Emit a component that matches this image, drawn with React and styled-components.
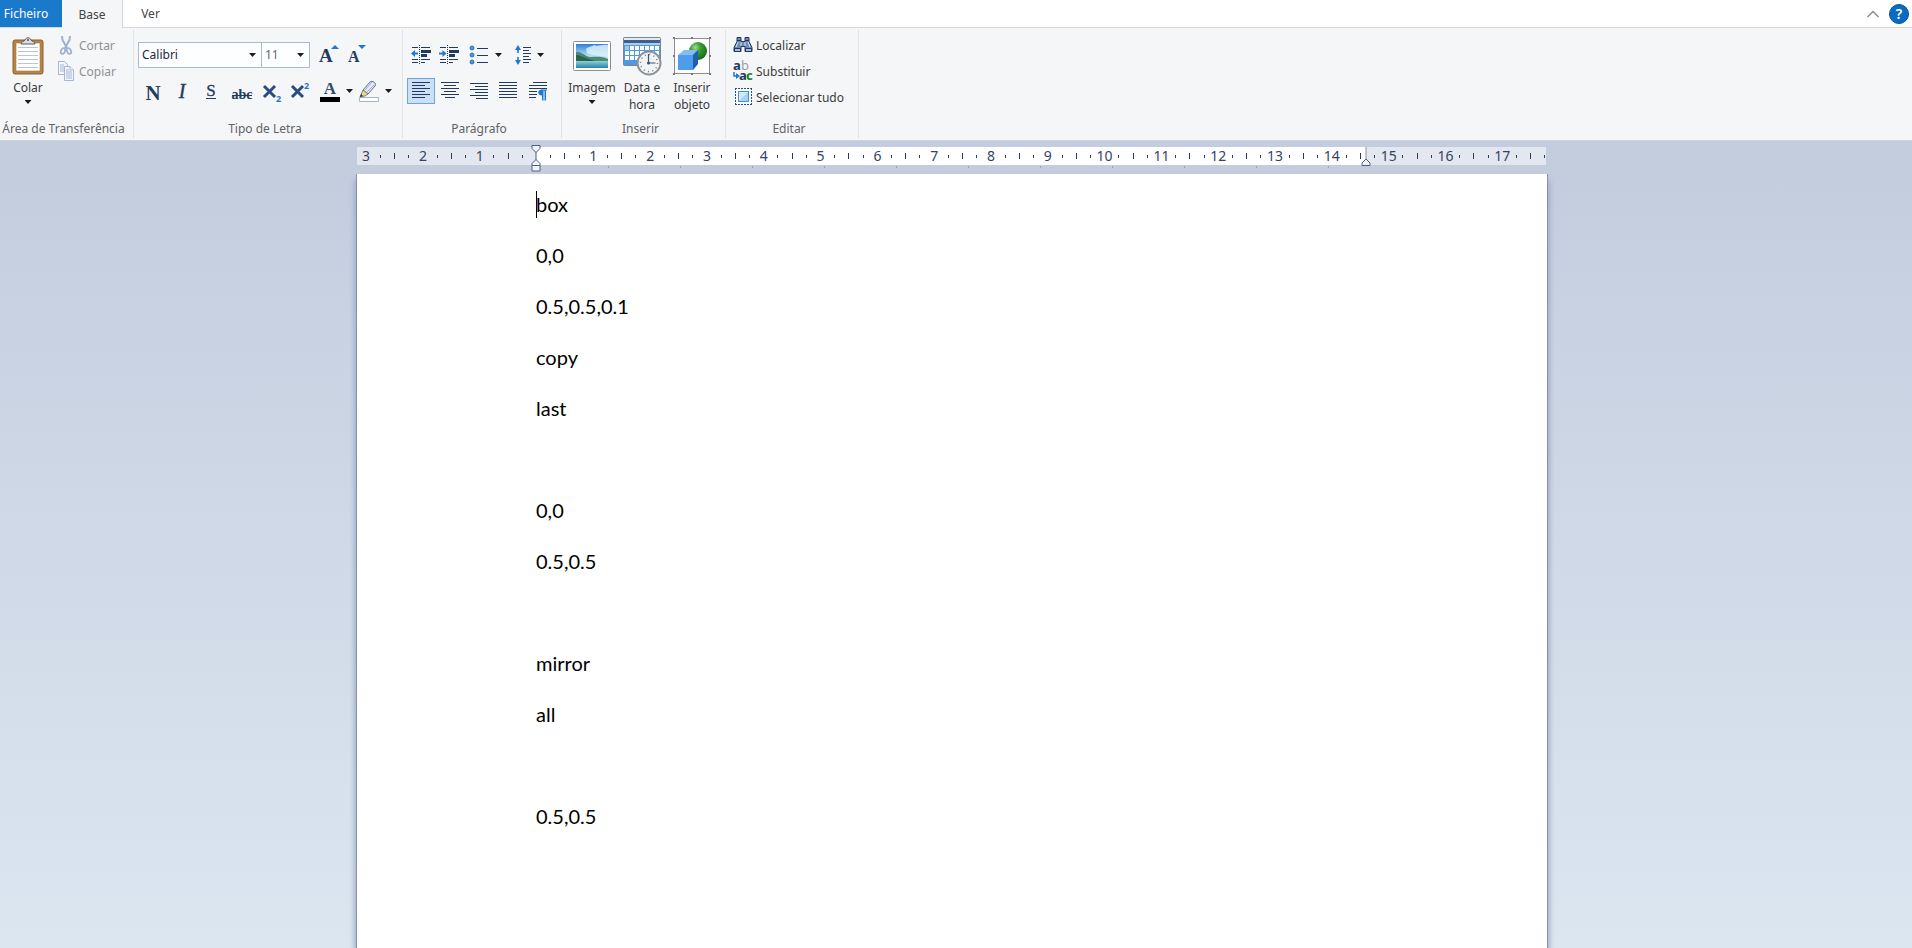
import styled, { createGlobalStyle } from "styled-components";

const GlobalStyle = createGlobalStyle`
  * { box-sizing: border-box; }
  body {
    margin: 0;
    font-family: "Noto Sans", "Open Sans", sans-serif;
    font-size: 12px;
    color: #3b3b3b;
  }
  button, select {
    font: inherit;
    color: inherit;
    background: none;
    border: none;
    border-radius: 0;
    margin: 0;
    padding: 0;
  }
  svg { display: block; flex: none; overflow: visible; }
`;

const Window = styled.div`
  display: flex;
  flex-direction: column;
  height: 100vh;
  overflow: hidden;
  background: #fff;
`;

const TabBar = styled.nav`
  display: flex;
  flex: none;
  height: 28px;
  background: #fff;
  border-bottom: 1px solid #d5d9de;
`;

const Tab = styled.button`
  height: ${({ $kind }) => ($kind === "active" ? "28px" : "27px")};
  width: ${({ $kind }) => ($kind === "file" ? "62px" : $kind === "active" ? "61px" : "55px")};
  padding-right: ${({ $kind }) => ($kind === "file" ? "10px" : "0")};
  background: ${({ $kind }) => ({ file: "#1979ca", active: "#f5f6f7" }[$kind] || "none")};
  color: ${({ $kind }) => ($kind === "file" ? "#fff" : "#444")};
  border-right: ${({ $kind }) => ($kind === "active" ? "1px solid #d5d9de" : "none")};
`;

const TabTools = styled.div`
  display: flex;
  align-items: center;
  gap: 10px;
  margin-left: auto;
  padding-right: 3px;
`;

const Help = styled.button`
  width: 20px;
  height: 20px;
  border-radius: 50%;
  border: 1px solid #0a4f9c;
  background: #0b6bc4;
  color: #fff;
  font-size: 14px;
  font-weight: 600;
  line-height: 18px;
`;

const Ribbon = styled.div`
  display: flex;
  flex: none;
  height: 113px;
  padding: 2px 0;
  background: #f5f6f7;
  border-bottom: 1px solid #ccd3de;
`;

const GroupBox = styled.section`
  display: flex;
  flex-direction: column;
  width: ${({ $width }) => $width}px;
  height: 108px;
  border-right: 1px solid #dfe2e6;
`;

const GroupBody = styled.div`
  display: flex;
  height: 90px;
  padding-left: ${({ $left }) => $left || 0}px;
`;

const GroupLabel = styled.div`
  display: flex;
  justify-content: center;
  padding-right: 6px;
  line-height: 19px;
  white-space: nowrap;
  color: #5f6368;
`;

const BigButton = styled.button`
  display: flex;
  flex-direction: column;
  align-items: center;
  width: ${({ $width }) => $width || 50}px;
  padding-top: 5px;
  line-height: 17px;
`;

const BigIcon = styled.span`
  display: flex;
  align-items: center;
  height: 44px;
  padding-bottom: 3px;
`;

const Arrow = styled.span`
  flex: none;
  width: 7px;
  height: 4px;
  margin-top: ${({ $below }) => ($below ? "4px" : "0")};
  background: #1b1b1b;
  clip-path: polygon(0 0, 100% 0, 50% 100%);
`;

const Stack = styled.div`
  display: flex;
  flex-direction: column;
  padding-top: 2px;
`;

const SmallButton = styled.button`
  display: flex;
  align-items: center;
  gap: ${({ $gap }) => $gap || 3}px;
  height: 26px;
  padding-left: 2px;
  white-space: nowrap;
  color: ${({ disabled }) => (disabled ? "#8f9296" : "inherit")};
`;

const ToolRows = styled.div`
  display: flex;
  flex-direction: column;
  gap: 10px;
  padding-top: 12px;
`;

const ToolRow = styled.div`
  display: flex;
  gap: ${({ $gap }) => $gap || 0}px;
  height: 26px;
`;

const ComboWrap = styled.label`
  display: flex;
  align-items: center;
  position: relative;
  width: ${({ $width }) => $width}px;
  height: 26px;
  margin-right: ${({ $after }) => $after || -1}px;
  border: 1px solid #abbacf;
  background: #fdfeff;

  ${Arrow} {
    position: absolute;
    right: 5px;
    pointer-events: none;
  }
`;

const Combo = styled.select`
  appearance: none;
  width: 100%;
  height: 24px;
  padding: 0 0 1px 3px;
  color: ${({ $muted }) => ($muted ? "#5d6673" : "#1c2744")};
`;

const IconButton = styled.button`
  display: flex;
  align-items: center;
  justify-content: center;
  width: ${({ $width }) => $width || 28}px;
  height: 26px;
  border: 1px solid ${({ $pressed }) => ($pressed ? "#6fa5d8" : "transparent")};
  background: ${({ $pressed }) => ($pressed ? "#c9e0f7" : "none")};
`;

const SplitButton = styled.button`
  display: flex;
  align-items: center;
  gap: 6px;
  padding-left: ${({ $left }) => $left || 6}px;
`;

const Workspace = styled.main`
  display: flex;
  flex: 1;
  flex-direction: column;
  align-items: center;
  min-height: 0;
  padding: 6px 8px 0 0;
  background: linear-gradient(#c4cdde 0, #c4cdde 30px, #dce6f1 100%);
`;

const Ruler = styled.div`
  position: relative;
  flex: none;
  width: 100%;
  max-width: 1190px;
  height: 27px;
  padding-right: 1px;
`;

const RulerTrack = styled.div`
  height: 18px;
  overflow: hidden;
  background: linear-gradient(90deg, #e3e7ef 179px, #fff 179px, #fff 1009px, #e3e7ef 1009px);
`;

const Marks = styled.div`
  display: grid;
  grid-template-columns: repeat(84, 1fr);
  align-items: center;
  justify-items: center;
  width: calc(100% + 6px);
  height: 18px;
  padding-left: 2px;
`;

const Tick = styled.span`
  width: 1px;
  height: ${({ $half }) => ($half ? 6 : 3)}px;
  background: #2d3c57;
`;

const Mark = styled.span`
  display: flex;
  justify-content: center;
  width: 0;
  font-size: 14px;
  line-height: 18px;
  color: #34445f;
`;

const TabStops = styled.div`
  width: 793px;
  height: 2px;
  margin: 1px 0 0 179px;
  background: linear-gradient(90deg, #9aa5b8 1px, transparent 1px) 0 0 / 72px 2px;
`;

const Indent = styled.svg`
  position: absolute;
  top: ${({ $top }) => $top}px;
  left: ${({ $left }) => $left}px;
`;

const Page = styled.article`
  position: relative;
  flex: 1;
  width: 100%;
  max-width: 1190px;
  min-height: 0;
  padding: 5px 180px 0 179px;
  background: #fff;
  box-shadow: -1px 0 #8790ac, 1px 0 #8790ac, 0 8px 6px 2px #97a3bf;
  clip-path: inset(0 -8px);
  font-family: Lato, "Noto Sans", sans-serif;
  font-size: 20px;
  line-height: 51px;
  color: #000;
`;

const Paragraph = styled.p`
  height: 51px;
  margin: 0;
`;

const Caret = styled.span`
  position: absolute;
  top: 17px;
  left: 179px;
  width: 1px;
  height: 27px;
  background: #000;
`;

const NAVY = "#223a5e";
const BLUE = "#1f78cf";

function Group({ label, width, left, children }) {
  return (
    <GroupBox $width={width} aria-label={label}>
      <GroupBody $left={left}>{children}</GroupBody>
      <GroupLabel>{label}</GroupLabel>
    </GroupBox>
  );
}

const PasteIcon = () => (
  <svg width="32" height="38" viewBox="0 0 32 38">
    <rect x="1" y="3" width="30" height="34" rx="2" fill="#b98443" stroke="#8c6030" />
    <rect x="4" y="6" width="24" height="28" fill="#fff" stroke="#9c7848" strokeWidth=".6" />
    {[11, 15, 19, 23, 27, 31].map((y) => (
      <path key={y} d={`M6 ${y - 0.5}h20`} stroke="#b3c6dd" />
    ))}
    <path d="M9 7c0-3 3-2 4-4 1-3 5-3 6 0 1 2 4 1 4 4z" fill="#d9dde1" stroke="#565b60" />
    <circle cx="16" cy="3" r="1" fill="#4b4f54" />
  </svg>
);

const CutIcon = () => (
  <svg width="16" height="20" viewBox="0 0 16 20" fill="none" stroke="#9fb0cd">
    <path d="M4 1l.5 4L9 13M12 1l-.5 4L7 13" strokeWidth="2" />
    <ellipse cx="5" cy="16" rx="2" ry="3" strokeWidth="1.7" transform="rotate(25 5 16)" />
    <ellipse cx="11" cy="16" rx="2" ry="3" strokeWidth="1.7" transform="rotate(-25 11 16)" />
  </svg>
);

const CopyIcon = () => (
  <svg width="16" height="20" viewBox="0 0 16 20" fill="#f2f6fc" stroke="#a5b7d4">
    <path d="M.5.5h6l3 3v10h-9z" />
    <path d="M2 4h4M2 6h5M2 8h5M2 10h5" />
    <path d="M6.500 5.500h5.500l3.500 3.500v10.500h-9z" />
    <path d="M12 5.500v3.500h3.500M8 9h3M8 11h6M8 13h6M8 15h6M8 17h6" />
  </svg>
);

const GrowIcon = ({ shrink }) => (
  <svg width="20" height="20" viewBox="0 0 20 20">
    <text x={shrink ? 1 : 0} y="17" fontFamily="Liberation Serif, serif" fontWeight="bold" fontSize={shrink ? 16 : 19} fill={NAVY}>A</text>
    <path d={shrink ? "M11 0h8l-4 4z" : "M12 4h8l-4-4z"} fill={BLUE} />
  </svg>
);

const StyleIcon = ({ kind }) => {
  const serif = { fontFamily: "Liberation Serif, serif", fill: NAVY, textAnchor: "middle" };
  return (
    <svg width="24" height="22" viewBox="0 0 24 22">
      {kind === "bold" && <text {...serif} x="12" y="20" fontSize="21" fontWeight="bold">N</text>}
      {kind === "italic" && <text {...serif} x="12" y="18" fontSize="20" fontStyle="italic" stroke={NAVY} strokeWidth=".4">I</text>}
      {kind === "under" && (
        <>
          <text {...serif} x="13" y="16" fontSize="17" stroke={NAVY} strokeWidth=".3">S</text>
          <path d="M8 18.500h10" stroke={NAVY} />
        </>
      )}
      {kind === "strike" && (
        <>
          <text {...serif} x="13" y="19" fontSize="14" fontWeight="bold">abc</text>
          <path d="M3 15.500h20" stroke={NAVY} />
        </>
      )}
    </svg>
  );
};

const ScriptIcon = ({ sup }) => (
  <svg width="20" height="22" viewBox="0 0 20 22">
    <path d="M2 6l11 11M13 6L2 17" stroke="#2b4c7e" strokeWidth="3" />
    <text x="14" y={sup ? 9 : 22} fontFamily="Noto Sans, sans-serif" fontWeight="bold" fontSize="9" fill={BLUE}>2</text>
  </svg>
);

const FontColorIcon = () => (
  <svg width="20" height="20" viewBox="0 0 20 20">
    <text x="10" y="13" textAnchor="middle" fontFamily="Liberation Serif, serif" fontWeight="bold" fontSize="17" fill="#34496b">A</text>
    <path d="M0 16h20v5H0z" fill="#000" />
  </svg>
);

const HighlightIcon = () => (
  <svg width="20" height="22" viewBox="0 0 20 22">
    <path d="M.5 17.500h19v4H.5z" fill="#fff" stroke="#a3b6c9" />
    <path d="M4 10L11 2c2-2 7 1 5 4L9 14z" fill="#e4eaf4" stroke="#5c7192" />
    <path d="M6 10l7-8M8 12l7-7" stroke="#9aabc6" />
    <path d="M4 10l5 4-3 2-5 1z" fill="#f1d67d" stroke="#5c6b80" strokeWidth=".8" />
    <path d="M1 17l1-3 2 2z" fill="#26303f" />
  </svg>
);

const IndentIcon = ({ more }) => (
  <svg width="20" height="20" viewBox="0 0 20 20" stroke={NAVY} fill="none">
    <path d="M1 2.500h6M10 2.500h9M1 14.500h6M10 14.500h9M1 17.500h6M10 17.500h4" />
    <path d="M10 6.500h10M10 10.500h6" strokeWidth="3" />
    <path d="M8.500 0v20" strokeDasharray="1 1" />
    <path d={more ? "M0 8.500h5" : "M3 8.500h4"} stroke={BLUE} strokeWidth="2" />
    <path d={more ? "M3.500 5v7l4-3.500z" : "M4 5v7L0 8.500z"} fill={BLUE} stroke="none" />
  </svg>
);

const BulletsIcon = () => (
  <svg width="20" height="20" viewBox="0 0 20 20">
    {[3, 10, 17].map((y) => (
      <g key={y}>
        <circle cx="3" cy={y} r="2" fill="#4b93dd" stroke="#1763b5" strokeWidth=".8" />
        <path d={`M8 ${y + 0.5}h11`} stroke={NAVY} />
      </g>
    ))}
  </svg>
);

const SpacingIcon = () => (
  <svg width="16" height="20" viewBox="0 0 16 20">
    <path d="M3 3v14" stroke={BLUE} strokeWidth="1.600" strokeDasharray="5 4" />
    <path d="M0 5l3-5 3 5zM0 15l3 5 3-5z" fill={BLUE} />
    <path d="M8 2.500h8M8 5.500h6M8 8.500h8M8 11.500h6M8 14.500h8M8 17.500h6" stroke={NAVY} />
  </svg>
);

const ALIGNS = {
  left: "M1 1.500h18M1 4.500h13M1 7.500h18M1 10.500h13M1 13.500h18M1 16.500h13",
  center: "M1 1.500h18M4 4.500h12M1 7.500h18M4 10.500h12M1 13.500h18M5 16.500h10",
  right: "M1 2.500h18M6 5.500h13M1 8.500h18M6 11.500h13M1 14.500h18M7 17.500h12",
  justify: "M1 1.500h18M1 4.500h18M1 7.500h18M1 10.500h18M1 13.500h18M1 16.500h18",
  mark: "M6 1.500h14M2 4.500h18M2 7.500h18M2 10.500h8M2 13.500h8M2 16.500h7",
};

const AlignIcon = ({ kind }) => (
  <svg width="20" height="20" viewBox="0 0 20 20">
    <path d={ALIGNS[kind]} stroke={NAVY} />
    {kind === "mark" && <path d="M20 8.500h-5c-5 0-5 6 0 6v5h1.500v-10h1v10H19v-10h1z" fill={BLUE} />}
  </svg>
);

const ImageIcon = () => (
  <svg width="38" height="30" viewBox="0 0 38 30">
    <defs>
      <linearGradient id="sky" x2="0" y2="1">
        <stop offset="0" stopColor="#2f7fd6" />
        <stop offset=".5" stopColor="#b5e2f6" />
      </linearGradient>
      <linearGradient id="lake" x2="0" y2="1">
        <stop offset="0" stopColor="#8fcfd4" />
        <stop offset="1" stopColor="#2585a8" />
      </linearGradient>
    </defs>
    <rect x=".5" y=".5" width="37" height="29" rx="1" fill="#fff" stroke="#8a8f94" />
    <rect x="3" y="3" width="32" height="24" fill="url(#sky)" />
    <path d="M13 8c3-3 6-2 8-4 3 2 8-1 14 0v12c-7-2-12 0-21-4z" fill="#e4f4fb" opacity=".8" />
    <path d="M3 11c5-1 8 4 14 5 6 0 11-1 18 2v3H3z" fill="#4c8a73" />
    <path d="M3 14c4 0 6 2 10 3l9 3H3z" fill="#2a6450" />
    <path d="M3 20h32v7H3z" fill="url(#lake)" />
  </svg>
);

const DateIcon = () => (
  <svg width="40" height="40" viewBox="0 0 40 40">
    <rect x="1.500" y="1.500" width="37" height="28" rx="1" fill="#4f98e3" stroke="#7b8490" />
    <path d="M2 2h36v2H2z" fill="#e4eaf2" />
    <path d="M2 4h36v3H2z" fill="#405f8b" />
    <path d="M2 7h36v2H2z" fill="#a9cdf2" />
    {[10, 15, 20].map((y) =>
      [3, 8, 13, 18, 23, 28, 33].map((x) => (
        <rect key={`${x}-${y}`} x={x} y={y} width="4" height="4" fill={y === 10 && x < 8 ? "#9dc8f3" : "#fff"} />
      ))
    )}
    <circle cx="27" cy="27" r="11.500" fill="#f2f3f4" stroke="#8d9297" strokeWidth="2" />
    <circle cx="27" cy="27" r="8.500" fill="none" stroke="#6c7278" strokeWidth="1.500" strokeDasharray="1 3.450" />
    <path d="M26.500 18v9h7" fill="none" stroke="#3c5572" strokeWidth="1.200" />
    <circle cx="26.500" cy="27" r="1.500" fill="#3c5572" />
  </svg>
);

const ObjectIcon = () => (
  <svg width="38" height="38" viewBox="0 0 38 38">
    <defs>
      <radialGradient id="ball" cx=".35" cy=".3" r=".7">
        <stop offset="0" stopColor="#a4dc93" />
        <stop offset=".4" stopColor="#3d9f35" />
        <stop offset="1" stopColor="#17701c" />
      </radialGradient>
    </defs>
    <rect x="1.500" y="1.500" width="35" height="35" fill="#fff" stroke="#8d8d8d" />
    <path d="M0 0h2v2H0zM36 0h2v2h-2zM0 36h2v2H0zM36 36h2v2h-2zM18 0h2v2h-2zM18 36h2v2h-2zM0 18h2v2H0zM36 18h2v2h-2z" fill="#777" />
    <circle cx="25" cy="14" r="9" fill="url(#ball)" />
    <path d="M5 18l6-5h14l-5 5z" fill="#82bdf3" />
    <path d="M5 18h15v15H5z" fill="#4d9dea" />
    <path d="M20 18l5-5v14l-5 6z" fill="#1e5fae" />
  </svg>
);

const FindIcon = () => (
  <svg width="20" height="18" viewBox="0 0 20 18" stroke="#1d3860" strokeWidth="1">
    <path d="M4 1.500h4v4h4v-4h4v4l3 6v4h-7v-5H8v5H1v-4l3-6z" fill="#7189b3" />
    <path d="M5 6l-2 5M15 6l2 5M8 6v4M12 6v4" stroke="#dce6f5" />
    <path d="M1.500 12.500h6v3h-6zM12.500 12.500h6v3h-6z" fill="#a9bddb" />
    <path d="M4 4.500h4M12 4.500h4" />
  </svg>
);

const ReplaceIcon = () => (
  <svg width="20" height="22" viewBox="0 0 20 22" fontFamily="Noto Sans, sans-serif" fontSize="13">
    <text x="0" y="10" fontWeight="bold" fill={NAVY}>a</text>
    <text x="8" y="10" fill="#9b9fa5">b</text>
    <text x="6" y="20" fontWeight="bold" fill={NAVY}>a</text>
    <text x="13" y="20" fontWeight="bold" fill="#138023">c</text>
    <path d="M1 12v4h3" fill="none" stroke={BLUE} strokeWidth="1.500" />
    <path d="M3 13v6l4-3z" fill={BLUE} />
  </svg>
);

const SelectAllIcon = () => (
  <svg width="20" height="18" viewBox="0 0 20 18">
    <rect x="2.500" y=".5" width="16" height="16" fill="#fff" />
    <path d="M2 .5h17M2 16.500h17M2.500 0v17M18.500 0v17" stroke="#1b5288" strokeDasharray="2 1" />
    <rect x="5.500" y="3.500" width="10" height="10" fill="#a5d3f8" stroke="#4990cf" />
    <path d="M6 13V4h9z" fill="#d2eafd" />
  </svg>
);

const RULER_MARKS = Array.from({ length: 84 }, (_, i) => i - 12);

const LINES = [
  "box", "0,0", "0.5,0.5,0.1", "copy", "last", "", "0,0", "0.5,0.5", "", "mirror", "all", "", "0.5,0.5",
];

function RulerBar() {
  return (
    <Ruler>
      <RulerTrack>
        <Marks>
          {RULER_MARKS.map((q) => {
            if (q === 0) return <span key={q} />;
            if (q % 4 === 0) return <Mark key={q}>{Math.abs(q / 4)}</Mark>;
            return <Tick key={q} $half={q % 2 === 0} />;
          })}
        </Marks>
      </RulerTrack>
      <TabStops />
      <Indent $top={-2} $left={174} width="10" height="27" viewBox="0 0 10 27" fill="#f4f6fa" stroke="#4a617f">
        <path d="M5 6v10" />
        <path d="M1 .5h8v3L5 7.500 1 3.500z" />
        <path d="M5 14.500l4 4v2H1v-2zM1 20.500h8v5.500H1z" />
      </Indent>
      <Indent $top={0} $left={1004} width="10" height="19" viewBox="0 0 10 19" fill="#f4f6fa" stroke="#4a617f">
        <path d="M5 0v12" stroke="#8492a8" />
        <path d="M5 12l4 4v2.500H1V16z" />
      </Indent>
    </Ruler>
  );
}

export default function App() {
  return (
    <>
      <GlobalStyle />
      <Window>
        <TabBar>
          <Tab $kind="file">Ficheiro</Tab>
          <Tab $kind="active">Base</Tab>
          <Tab>Ver</Tab>
          <TabTools>
            <button aria-label="Minimizar friso">
              <svg width="12" height="8" viewBox="0 0 12 8" fill="none" stroke="#8d8d8d" strokeWidth="1.500">
                <path d="M.5 7L6 1.500 11.500 7" />
              </svg>
            </button>
            <Help>?</Help>
          </TabTools>
        </TabBar>

        <Ribbon>
          <Group label="Área de Transferência" width={134}>
            <BigButton $width={56}>
              <BigIcon><PasteIcon /></BigIcon>
              Colar
              <Arrow $below />
            </BigButton>
            <Stack>
              <SmallButton disabled $gap={5}><CutIcon />Cortar</SmallButton>
              <SmallButton disabled $gap={5}><CopyIcon />Copiar</SmallButton>
            </Stack>
          </Group>

          <Group label="Tipo de Letra" width={269} left={4}>
            <ToolRows>
              <ToolRow>
                <ComboWrap $width={124}>
                  <Combo aria-label="Tipo de letra" defaultValue="Calibri">
                    <option>Calibri</option>
                  </Combo>
                  <Arrow />
                </ComboWrap>
                <ComboWrap $width={49} $after={5}>
                  <Combo aria-label="Tamanho" $muted defaultValue="11">
                    <option>11</option>
                  </Combo>
                  <Arrow />
                </ComboWrap>
                <IconButton aria-label="Aumentar"><GrowIcon /></IconButton>
                <IconButton aria-label="Diminuir"><GrowIcon shrink /></IconButton>
              </ToolRow>
              <ToolRow>
                <IconButton aria-label="Negrito" $width={30}><StyleIcon kind="bold" /></IconButton>
                <IconButton aria-label="Itálico"><StyleIcon kind="italic" /></IconButton>
                <IconButton aria-label="Sublinhado"><StyleIcon kind="under" /></IconButton>
                <IconButton aria-label="Rasurado" $width={34}><StyleIcon kind="strike" /></IconButton>
                <IconButton aria-label="Inferior à linha"><ScriptIcon /></IconButton>
                <IconButton aria-label="Superior à linha"><ScriptIcon sup /></IconButton>
                <SplitButton aria-label="Cor do texto"><FontColorIcon /><Arrow /></SplitButton>
                <SplitButton aria-label="Realce"><HighlightIcon /><Arrow /></SplitButton>
              </ToolRow>
            </ToolRows>
          </Group>

          <Group label="Parágrafo" width={159} left={4}>
            <ToolRows>
              <ToolRow>
                <IconButton aria-label="Diminuir avanço"><IndentIcon /></IconButton>
                <IconButton aria-label="Aumentar avanço"><IndentIcon more /></IconButton>
                <SplitButton aria-label="Lista"><BulletsIcon /><Arrow /></SplitButton>
                <SplitButton aria-label="Espaçamento" $left={13}><SpacingIcon /><Arrow /></SplitButton>
              </ToolRow>
              <ToolRow $gap={1}>
                {Object.keys(ALIGNS).map((kind) => (
                  <IconButton key={kind} aria-label={kind} $pressed={kind === "left"}>
                    <AlignIcon kind={kind} />
                  </IconButton>
                ))}
              </ToolRow>
            </ToolRows>
          </Group>

          <Group label="Inserir" width={164} left={5}>
            <BigButton>
              <BigIcon><ImageIcon /></BigIcon>
              Imagem
              <Arrow $below />
            </BigButton>
            <BigButton>
              <BigIcon><DateIcon /></BigIcon>
              Data e<br />hora
            </BigButton>
            <BigButton>
              <BigIcon><ObjectIcon /></BigIcon>
              Inserir<br />objeto
            </BigButton>
          </Group>

          <Group label="Editar" width={133} left={5}>
            <Stack>
              <SmallButton><FindIcon />Localizar</SmallButton>
              <SmallButton><ReplaceIcon />Substituir</SmallButton>
              <SmallButton><SelectAllIcon />Selecionar tudo</SmallButton>
            </Stack>
          </Group>
        </Ribbon>

        <Workspace>
          <RulerBar />
          <Page>
            <Caret />
            {LINES.map((line, i) => (
              <Paragraph key={i}>{line}</Paragraph>
            ))}
          </Page>
        </Workspace>
      </Window>
    </>
  );
}
